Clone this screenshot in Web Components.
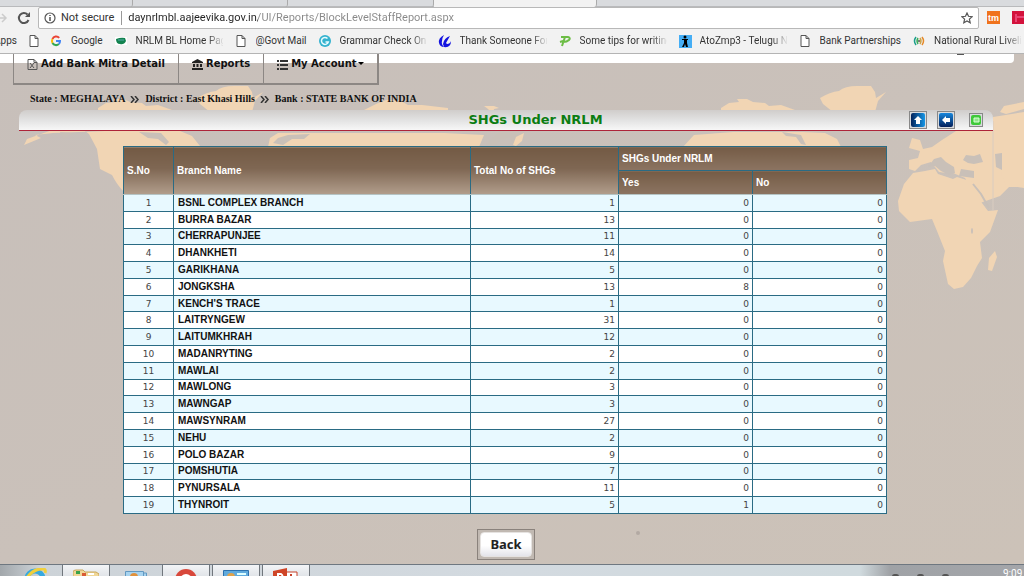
<!DOCTYPE html>
<html lang="en">
<head>
<meta charset="utf-8">
<title>SHGs Under NRLM</title>
<style>
  html, body { margin: 0; height: 100%; overflow: hidden; }
  body { display: flex; flex-direction: column; font-family: "Liberation Sans", Arial, sans-serif; }
  page-view { flex: 1; min-height: 0; }
</style>
</head>
<body>
<browser-toolbar>
  <bookmark-item slot="marks">Apps</bookmark-item>
  <bookmark-item slot="marks" icon="doc"></bookmark-item>
  <bookmark-item slot="marks" icon="google">Google</bookmark-item>
  <bookmark-item slot="marks" icon="nrlm">NRLM BL Home Page</bookmark-item>
  <bookmark-item slot="marks" icon="doc">@Govt Mail</bookmark-item>
  <bookmark-item slot="marks" icon="grammar">Grammar Check Online</bookmark-item>
  <bookmark-item slot="marks" icon="swirl">Thank Someone For</bookmark-item>
  <bookmark-item slot="marks" icon="tips">Some tips for writing</bookmark-item>
  <bookmark-item slot="marks" icon="walker">AtoZmp3 - Telugu N</bookmark-item>
  <bookmark-item slot="marks" icon="doc">Bank Partnerships</bookmark-item>
  <bookmark-item slot="marks" icon="rural">National Rural Livelih</bookmark-item>
</browser-toolbar>
<page-view>
  <site-menu></site-menu>
  <location-trail></location-trail>
  <section-title>SHGs Under NRLM</section-title>
  <shg-table></shg-table>
  <back-button>Back</back-button>
</page-view>
<task-bar></task-bar>

<script>
const define = (name, html, setup) => customElements.define(name, class extends HTMLElement {
  connectedCallback() {
    if (this.shadowRoot) return;
    const root = this.attachShadow({ mode: 'open' });
    root.innerHTML = typeof html === 'function' ? html(this) : html;
    if (setup) setup(this, root);
  }
});

const markIcons = {
  doc: '<path d="M2 .5h5l3 3v8H2zM7 .5v3h3" fill="#fff" stroke="#555"/>',
  google: '<g fill="none" stroke-width="2"><path d="M9.200 2.800A4 4 0 0 0 2.500 4" stroke="#ea4335"/><path d="M2.500 4a4 4 0 0 0 0 4" stroke="#fbbc05"/><path d="M2.500 8a4 4 0 0 0 6.300 1" stroke="#34a853"/><path d="M8.800 9A4 4 0 0 0 10 6H6" stroke="#4285f4"/></g>',
  nrlm: '<path d="M0 2h12v8H0z" fill="#fff"/><path d="M1 4q5-2 9-1l1 3q-2 4-6 3-4 0-4-5z" fill="#13834f"/><path d="M3 5h6" stroke="#5aa" />',
  grammar: '<circle cx="6" cy="6" r="6" fill="#35b3cf"/><path d="M8.500 3.500a3.500 3.500 0 1 0 .8 3.500H6.500" fill="none" stroke="#e9fbff" stroke-width="1.500"/>',
  swirl: '<path d="M5 0Q-1 3 0 8q1 4 5 4-3-3-2-6 0-3 2-6z" fill="#1414e0"/><path d="M5 12q7 1 7-6-1 3-4 3l-1-1 4-7Q5 3 4 9z" fill="#1414e0"/>',
  tips: '<path d="M2 2h7q3 1 1 3-2 2-6 2M6 2 3 11M1 7l3-1" fill="none" stroke="#6cbd45" stroke-width="2"/>',
  walker: '<path d="M0 0h13v13H0z" fill="#45aef5"/><circle cx="6" cy="2" r="1.500"/><path d="M5 4h3v4l1 4H7L6 9l-1 3H3l2-4zM3 4h6v1H3z"/>',
  rural: '<g fill="none" stroke-width="1.500"><path d="M3 2Q0 6 3 10" stroke="#1b9e8b"/><path d="M9 2q3 4 0 8" stroke="#e58a2a"/><path d="M5 3Q3 6 5 9" stroke="#3cae5a"/><path d="M7 3q2 3 0 6" stroke="#c9a34a"/></g><circle cx="6" cy="6" r="1" fill="#555"/>'
};

define('bookmark-item', el => `
<style>
  :host { display: block; flex: none; }
  a { display: flex; align-items: center; gap: 9px; color: #333; text-decoration: none; }
  svg { width: 12px; height: 12px; flex: none; overflow: visible; }
  span { display: block; max-width: 87px; overflow: hidden; white-space: nowrap; }
  span.long { mask-image: linear-gradient(90deg, #000 72px, transparent 88px); }
</style>
<a href="#" aria-label="${el.textContent || 'Untitled page'}">
  ${el.getAttribute('icon') ? `<svg viewBox="0 0 12 12" aria-hidden="true">${markIcons[el.getAttribute('icon')]}</svg>` : ''}
  ${el.textContent ? `<span class="${el.textContent.length > 17 || /BL|Thank/.test(el.textContent) ? 'long' : ''}"><slot></slot></span>` : ''}
</a>`);

define('browser-toolbar', `
<style>
  :host { display: block; flex: none; overflow: hidden; background: #f2f2f2; border-bottom: 1px solid #b4b4b4;
          font-family: Roboto, "Noto Sans", sans-serif; color: #333; }
  .tabs { display: grid; grid-template-columns: 133px 155px 146px 163px 1fr; height: 6px; border-bottom: 1px solid #b9babc; margin-bottom: -1px; background: #d9dbde; }
  .tabs i { border-right: 1px solid #aaa; box-sizing: border-box; border-bottom-right-radius: 3px; }
  .tabs i.on { background: #f2f2f2; border-bottom: 0; height: 7px; }
  .tabs i:last-child { border: 0; }
  .bar { display: flex; align-items: center; height: 23px; }
  button { border: 0; background: none; padding: 0; display: grid; place-items: center; flex: none; }
  .fwd { width: 12px; margin-left: -4px; }
  .reload { width: 16px; margin: 0 6px 0 8px; }
  form { flex: 1; display: flex; align-items: center; height: 20px; border: 1px solid #b8b8b8; border-radius: 2px; background: #fff; padding: 0 5px; font-size: 11px; }
  form > svg { flex: none; margin-right: 5px; }
  .state { padding-right: 7px; border-right: 1px solid #999; line-height: 14px; white-space: nowrap; margin-right: 6px; }
  input { flex: 1; min-width: 0; border: 0; padding: 0; outline: 0; font: inherit; font-size: 11px; height: 18px; color: #888;
    background: linear-gradient(90deg, #222 130px, #888 130px); background-clip: text; -webkit-text-fill-color: transparent; }
  .ext { display: flex; gap: 12px; margin: 0 -6px 0 8px; }
  .tm, .red { width: 13px; height: 13px; color: #fff; font: bold 9px/10px "Liberation Sans", sans-serif; }
  .tm { background: #f0731d; } .red { background: #d3123c; width: 18px; }
  nav { display: flex; align-items: center; gap: 12px; height: 24px; margin-left: -6px; font-size: 10px; line-height: 16px; overflow: hidden; }
  ::slotted(bookmark-item:nth-child(2)) { margin: 0 -2px 0 -1px; }
</style>
<div class="tabs"><i></i><i></i><i></i><i class="on"></i><i></i></div>
<div class="bar">
  <button class="fwd" aria-label="Forward"><svg width="12" height="12" viewBox="0 0 12 12" fill="none" stroke="#ccc" stroke-width="1.500"><path d="M0 6h10M6 2l4 4-4 4"/></svg></button>
  <button class="reload" aria-label="Reload"><svg width="14" height="14" viewBox="0 0 14 14"><path d="M11.500 9A5 5 0 1 1 10.500 3.500" fill="none" stroke="#555" stroke-width="2"/><path d="M13 1v5H8z" fill="#555"/></svg></button>
  <form onsubmit="return false">
    <svg width="12" height="12" viewBox="0 0 12 12"><circle cx="6" cy="6" r="5" fill="none" stroke="#555" stroke-width="1.200"/><path d="M6 5v4M6 3v1" stroke="#444" stroke-width="1.400"/></svg>
    <span class="state">Not secure</span>
    <input aria-label="Address" value="daynrlmbl.aajeevika.gov.in/UI/Reports/BlockLevelStaffReport.aspx">
    <button aria-label="Bookmark this page"><svg width="12" height="12" viewBox="0 0 12 12"><path d="m6 1 1.500 3.300 3.600.4-2.700 2.400.8 3.600L6 8.900l-3.200 1.800.8-3.600L.9 4.700l3.600-.4z" fill="none" stroke="#555" stroke-width="1.200"/></svg></button>
  </form>
  <div class="ext"><button class="tm">tm</button><button class="red" aria-label="Extension"><svg width="18" height="13"><path d="M4 3v8M5 6h12" stroke="#f7a" /></svg></button></div>
</div>
<nav aria-label="Bookmarks"><slot name="marks"></slot></nav>`);

define('page-view', `
<style>
  :host { display: block; position: relative; overflow: hidden; background: #c9c0b8; }
  .map { position: absolute; inset: 0; width: 1024px; height: 511px; }
  .content { position: relative; }
</style>
<svg class="map" viewBox="0 53 1024 511" aria-hidden="true">
  <defs><linearGradient id="shade" x2="1" y2="1"><stop stop-color="#c7bfba"/><stop offset=".5" stop-color="#cac1ba"/><stop offset="1" stop-color="#ccc2b8"/></linearGradient></defs>
  <path d="M0 53h1024v511H0z" fill="url(#shade)"/>
  <g fill="#f1d5b4">
    <g id="arctic">
      <path d="M197 97q10-6 19-7 6-5 18-5h14l4 6 1 6 10-6-8 9-3 11h-42l-10-8z"/>
      <path d="m98 107 8-5 10-1-2-3h10l6 3 12 1 4 3 12-1 14 5-30 3H98z"/>
    </g>
    <use href="#arctic" x="623"/>
    <path d="m362 110 14-7 10-4 15 1 7 4h14l26 3v4h-96zM484 105h10l5 2-5 1-1 5-5-5z"/>
    <path d="m24 144 17-7-6-3 18-2 52-2h75l12 5 8 10H124v46q-7-7-12-17l-12-6-3-20-8-15-12-9-22 4-28 10z"/>
    <path d="m268 146 2-9 8-5h166l40 2-5 12H268z"/>
    <path d="m682 147 12-13 39-3h70l22 1 12 6 4 8H682z"/>
    <path d="m909 168v-9l9-2 2-7-11-3 3-10 8 2 3 9 9-2 10-7 14-9h37v-14l31-5v76l-14-2-10 10-20 7-15-25-12-5-8-8 2 8-8-1-8-10-10 3-6 6z"/>
    <path d="m1000 111 4-6 20-4v7l-18 5z"/>
    <path d="m913 172 12-2 10-2 3 5 15 5 4-2 16 5 6 17 9 12 10-1-8 22-10 10 2 16-5 8-6 12-8 9-9 2-6-5-5-23 2-10-8-20-5-12-22 3-11-11-1-10 6-17z"/>
    <path d="m995 250 2 6-5 14-4-1 1-12zM997 160l27 2v24h-18z"/>
  </g>
  <g fill="#c9c0b8">
    <path d="m60 131 13 1-10 6zM139 131l22 1 8 9-3 3-8-6-10-1z"/>
    <path d="m782 131 19 3 5 10-5-1-5-7-10-1zM273 142l10 2 9-6h12l6-5-22 1-10 3z"/>
    <path d="m928 166 6-8 7-2 5 5 8 5 1 6-6 2-8-4-6-5zM963 159l3-5 8 1 6-2 3 8-9 2-6-1zM995 153l7-1v17l-6-3zM961 168l13 2v7l-15-2z"/>
  </g>
  <path d="m973 183 8 10 8 14" fill="none" stroke="#c9c0b8" stroke-width="2"/>
  <path d="m486 143 14-13h12l12 1-4 9-7 5-3-9-10 3-4 6z" fill="#c9c0b8"/>
  <path d="m513 144 3-8 8-4-2 8-6 5z" fill="#f1d5b4"/>
  <ellipse cx="972" cy="230" rx="1" ry="3" fill="#c9c0b8"/>
  <path d="M993 120v90" stroke="#d9ccc0"/>
  <circle cx="638" cy="532" r="2" fill="#b3a9a3"/>
</svg>
<div class="content"><slot></slot></div>`);

define('site-menu', `
<style>
  :host { display: block; }
  .strip { height: 9px; margin-right: 10px; background: #fff; border-bottom-right-radius: 4px; display: flow-root; }
  .strip i { display: block; width: 7px; height: 1px; margin-left: auto; margin-right: 50px; background: #555; }
  ul { display: flex; width: max-content; margin: -9px 0 0 13px; padding: 0; list-style: none; border: solid #8c8784; border-width: 0 2px 2px 1px; }
  li + li { border-left: 1px solid #8c8784; }
  a { display: flex; align-items: center; gap: 3px; height: 20px; padding: 0 13px 9px; color: #111; text-decoration: none;
      font: bold 10px/16px "DejaVu Sans", Verdana, sans-serif; white-space: nowrap; }
  svg { width: 11px; height: 11px; overflow: visible; }
  .arrow { width: 6px; height: 4px; margin-left: -2px; }
</style>
<div class="strip"><i></i></div>
<ul>
  <li><a href="#"><svg viewBox="0 0 11 11"><path d="M1 .5h6l3 3v7H1zM7 .5v3h3M3 4l4 5M7 4 3 9" fill="none" stroke="#555"/></svg>Add Bank Mitra Detail</a></li>
  <li><a href="#"><svg viewBox="0 0 11 11"><path d="m5.500 0 5.500 3v1H0V3zM1 5h2v3H1zM4.500 5h2v3h-2zM8 5h2v3H8zM0 9h11v2H0z" fill="#222"/></svg>Reports</a></li>
  <li><a href="#"><svg viewBox="0 0 11 11"><path d="M0 1h2v2H0zM3 1h8v2H3zM0 5h2v2H0zM3 5h8v2H3zM0 9h2v2H0zM3 9h8v2H3z" fill="#333"/></svg>My Account<svg class="arrow" viewBox="0 0 6 4"><path d="M0 0h6L3 3z"/></svg></a></li>
</ul>`);

define('location-trail', `
<style>
  :host { display: block; padding: 6px 30px 3px; font: bold 10px/16px "Liberation Serif", "Times New Roman", serif; color: #111; white-space: nowrap; }
  p { display: flex; align-items: center; gap: 5px; margin: 0; }
  svg { width: 10px; height: 7px; }
</style>
<p><span>State : MEGHALAYA</span><svg viewBox="0 0 10 7"><path d="m1 0 3 3.500L1 7M5 0l3 3.500L5 7" fill="none" stroke="#333" stroke-width="1.500"/></svg><span>District : East Khasi Hills</span><svg viewBox="0 0 10 7"><path d="m1 0 3 3.500L1 7M5 0l3 3.500L5 7" fill="none" stroke="#333" stroke-width="1.500"/></svg><span>Bank : STATE BANK OF INDIA</span></p>`);

define('section-title', `
<style>
  :host { display: grid; grid-template-columns: 1fr auto 1fr; align-items: center; height: 20px; margin: 0 31px 0 19px; padding-left: 59px;
          background: linear-gradient(#d0cdcb, #e2e2e2 50%, #f7f7f7); border-bottom: 1px solid #ad2439; border-radius: 8px 8px 0 0; }
  h1 { grid-column: 2; margin: 0; font: bold 13px/20px "DejaVu Sans", Verdana, sans-serif; color: #0b7d12; }
  div { display: flex; align-items: center; justify-content: flex-end; gap: 10px; padding-right: 10px; }
  button { width: 18px; height: 18px; padding: 1px; box-sizing: border-box; border: 1px solid #888; background: #d9dbdd; display: grid; place-items: center; }
  button:last-child { width: 14px; height: 14px; margin-left: 4px; }
  svg { display: block; }
</style>
<h1><slot></slot></h1>
<div>
  <button aria-label="Top"><svg width="14" height="14"><defs><linearGradient id="a"><stop stop-color="#04245c"/><stop offset="1" stop-color="#1596e6"/></linearGradient></defs><rect width="14" height="14" rx="2" fill="url(#a)"/><path d="m7 3 4 4H9v4H5V7H3z" fill="#fff"/></svg></button>
  <button aria-label="Previous"><svg width="14" height="14"><defs><linearGradient id="b" x2="0" y2="1"><stop stop-color="#1787dd"/><stop offset="1" stop-color="#04205a"/></linearGradient></defs><rect width="14" height="14" rx="2" fill="url(#b)"/><path d="m3 7 4-4v2h4v4H7v2z" fill="#fff"/></svg></button>
  <button aria-label="Export to Excel"><svg width="10" height="10"><rect width="10" height="10" rx="2" fill="#3fc93a"/><path d="M3 3h5v4H3z" fill="#8fe68a" stroke="#d9ffd6"/></svg></button>
</div>`);

const branches = [
  ['BSNL COMPLEX BRANCH', 1], ['BURRA BAZAR', 13], ['CHERRAPUNJEE', 11], ['DHANKHETI', 14], ['GARIKHANA', 5],
  ['JONGKSHA', 13, 8], ['KENCH\'S TRACE', 1], ['LAITRYNGEW', 31], ['LAITUMKHRAH', 12], ['MADANRYTING', 2],
  ['MAWLAI', 2], ['MAWLONG', 3], ['MAWNGAP', 3], ['MAWSYNRAM', 27], ['NEHU', 2], ['POLO BAZAR', 9],
  ['POMSHUTIA', 7], ['PYNURSALA', 11], ['THYNROIT', 5, 1]
];

define('shg-table', `
<style>
  :host { display: block; margin: 15px 137px 0 123px; }
  table { width: 100%; height: 368px; table-layout: fixed; border-collapse: collapse; border: 1px solid #2a6b84; font: 9px/12px "DejaVu Sans", Verdana, sans-serif; color: #444; }
  th, td { padding: 0 3px; border: 1px solid #2a6b84; }
  thead th { color: #fff; text-align: left; font: bold 10px/12px "Liberation Sans", Arial, sans-serif; background: linear-gradient(#755c46, #8c7462); }
  thead th[rowspan] { background: linear-gradient(#735a44, #7f6753 45%, #b29e8c); }
  thead tr { height: 24px; }
  thead tr:last-child th, thead th[rowspan] { border-bottom-color: #b5c4c4; }
  tbody tr { background: #fff; }
  tbody tr:nth-child(odd) { background: #e8f9ff; }
  td { text-align: right; }
  td:first-child { text-align: center; }
  tbody th { padding-left: 4px; text-align: left; font: bold 10px/12px "Liberation Sans", Arial, sans-serif; color: #111; }
  .no { width: 50px; } .total { width: 148px; } .count { width: 134px; }
</style>
<table>
  <colgroup><col class="no"><col><col class="total"><col class="count"><col class="count"></colgroup>
  <thead>
    <tr><th rowspan="2" scope="col">S.No</th><th rowspan="2" scope="col">Branch Name</th><th rowspan="2" scope="col">Total No of SHGs</th><th colspan="2" scope="colgroup">SHGs Under NRLM</th></tr>
    <tr><th scope="col">Yes</th><th scope="col">No</th></tr>
  </thead>
  <tbody></tbody>
</table>`, (el, root) => {
  root.querySelector('tbody').innerHTML = branches.map(([name, total, yes = 0], i) =>
    `<tr><td>${i + 1}</td><th scope="row">${name}</th><td>${total}</td><td>${yes}</td><td>0</td></tr>`).join('');
});

define('back-button', `
<style>
  :host { display: flex; justify-content: center; margin: 15px 31px 0 19px; }
  button { padding: 2px; border: 1px solid #8a827c; background: #c1b9b2; }
  span { display: block; padding: 0 9px; border-radius: 4px; background: linear-gradient(#fff 55%, #e4e4ea); border: 1px solid #e6e3e1; color: #222; font: bold 13px/23px "Noto Sans", "Open Sans", sans-serif; }
</style>
<button><span><slot></slot></span></button>`);

define('task-bar', `
<style>
  :host { display: flex; flex: none; height: 11px; overflow: hidden; border-top: 1px solid #6e7780; gap: 2px; padding-left: 12px;
          background: linear-gradient(90deg, #a2a7ab, #cdd3d8 40px, #d3dae0 50%, #d0dade 860px, #9fa2a6 890px, #a4a6aa); }
  button { flex: none; width: 48px; height: 30px; padding: 3px 0 0; border: 0; background: none; display: flex; justify-content: center; }
  button.open { border: 1px solid #71777d; border-width: 0 1px; background: linear-gradient(#f3f5f7, #dfe3e7 12px); }
  .tray { display: flex; gap: 18px; margin: 9px 52px 0 auto; }
  .tray i { width: 7px; height: 5px; border-radius: 3px; background: #555; }
  time { margin: 3px -16px 0 0; color: #fff; font: 10px/12px Roboto, "Noto Sans", sans-serif; white-space: nowrap; }
</style>
<button aria-label="Internet Explorer"><svg width="24" height="24"><circle cx="11" cy="11" r="8" fill="none" stroke="#36a9e0" stroke-width="5"/><path d="M1 13Q8 0 20 1q2 1 1 4" fill="none" stroke="#f0cf3c" stroke-width="3"/></svg></button>
<button class="open" aria-label="Explorer"><svg width="26" height="22"><path d="M0 4q0-2 3-2h7l2 2h11l3 2v16H0z" fill="#f0d797" stroke="#c8a65a"/><path d="M3 3h4v3H3z" fill="#3aa24b"/><path d="M9 5h4v3H9z" fill="#d95b34"/><path d="M15 5h6v2h-6z" fill="#fff"/></svg></button>
<button aria-label="Contacts"><svg width="22" height="22"><path d="M.5 3.500h18v18H.5zM18.500 5h3v16h-3" fill="#a7d3ef" stroke="#6299c2"/><circle cx="9" cy="9" r="4" fill="#e0913c"/></svg></button>
<button class="open" aria-label="Chrome"><svg width="24" height="24"><circle cx="12" cy="12" r="11" fill="#d8483b"/><circle cx="12" cy="12" r="5" fill="#f0a64f" stroke="#fff" stroke-width="2"/></svg></button>
<button class="open" aria-label="Control panel"><svg width="26" height="22"><path d="M.5 2.500h25v18H.5z" fill="#60aadd" stroke="#2c71ae"/><circle cx="8" cy="9" r="4" fill="#e0a24a"/><path d="M14 6h9M14 9h9" stroke="#dff" stroke-width="2"/></svg></button>
<button class="open" aria-label="PowerPoint"><svg width="26" height="22"><path d="M12 4h12v16H12z" fill="#fff" stroke="#c8432a"/><path d="M0 3 14 0v22H0z" fill="#cf4527"/><path d="M5 17V6h3q3 2 0 5H5" fill="none" stroke="#fff" stroke-width="2"/><path d="M18 6v5h4" fill="none" stroke="#c8432a" stroke-width="2"/></svg></button>
<div class="tray"><i></i><i></i><i></i></div>
<time>9:09 AM</time>`);
</script>
</body>
</html>
